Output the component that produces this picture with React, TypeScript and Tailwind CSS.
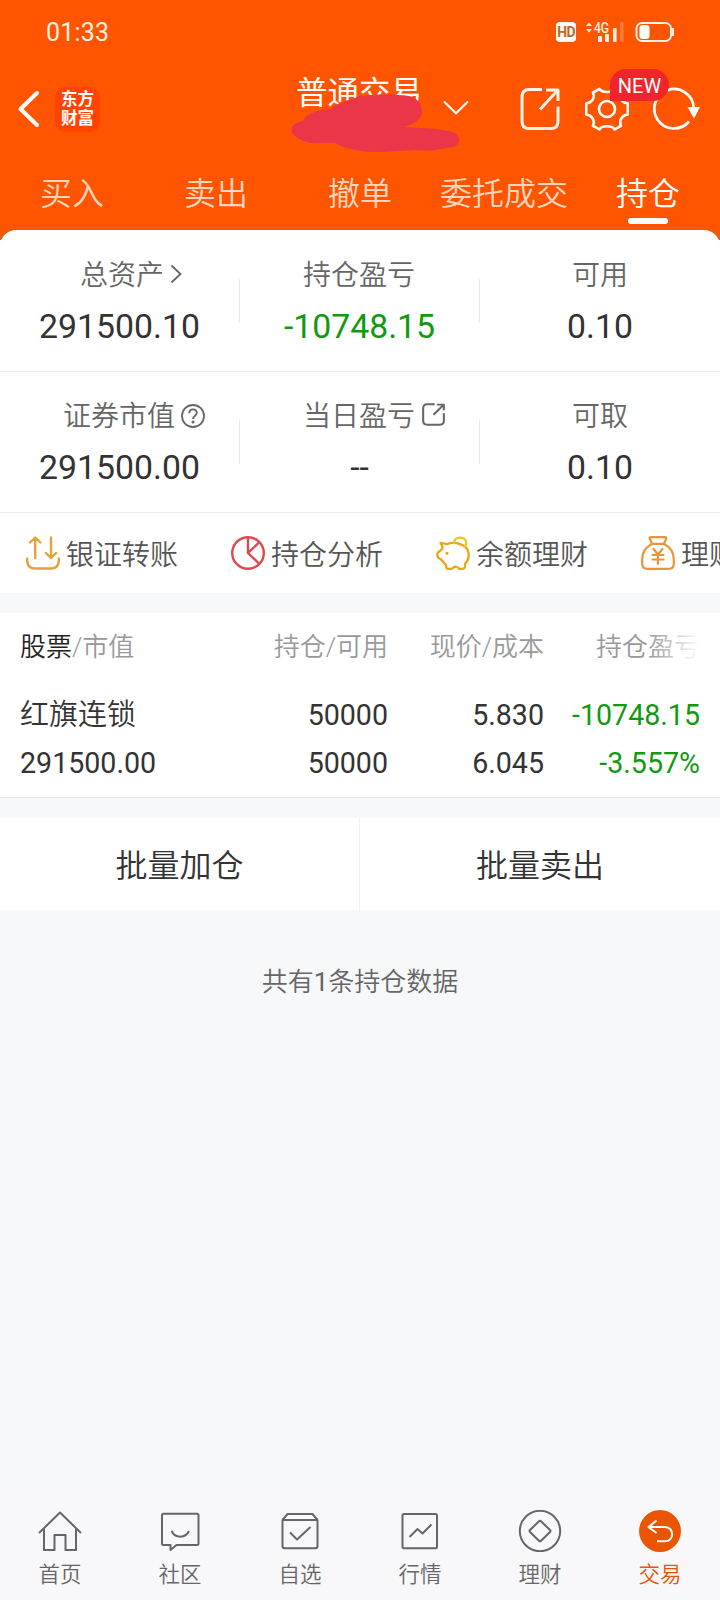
import type { ReactNode } from "react";

const tabs = ["买入", "卖出", "撤单", "委托成交", "持仓"];

const ShareIcon = ({ className, width }: { className: string; width: number }) => (
  <svg
    viewBox="0 0 40 44"
    preserveAspectRatio="none"
    className={className}
    fill="none"
    stroke="currentColor"
    strokeWidth={width}
    strokeLinejoin="round"
  >
    <path d="M22 2.5H9Q2 2.5 2 10V34Q2 41.5 9 41.5H31Q38 41.5 38 34V19.5" />
    <path d="M20 22.5L37 4M26 3H38V14" />
  </svg>
);

const assets = [
  [
    { label: "总资产", value: "291500.10", icon: "arrow" },
    { label: "持仓盈亏", value: "-10748.15", green: true },
    { label: "可用", value: "0.10" },
  ],
  [
    { label: "证券市值", value: "291500.00", icon: "help" },
    { label: "当日盈亏", value: "--", icon: "share" },
    { label: "可取", value: "0.10" },
  ],
];

const labelIcons: Record<string, ReactNode> = {
  arrow: (
    <svg viewBox="0 0 12 20" className="absolute left-full top-[7px] ml-[6px] h-5 w-3" fill="none" stroke="currentColor" strokeWidth="1.8">
      <path d="M1.5 1.5L10.5 10L1.5 18.5" />
    </svg>
  ),
  help: (
    <svg viewBox="0 0 24 24" className="absolute left-full top-[6px] ml-[6px] h-6 w-6" fill="none" stroke="currentColor" strokeWidth="1.8">
      <circle cx="12" cy="12" r="11" />
      <path d="M8.3 9.3C8.3 4 15.8 4.2 15.8 8.8C15.8 11.6 12 11.8 12 15" strokeWidth="1.9" />
      <circle cx="12" cy="18" r="0.7" fill="currentColor" />
    </svg>
  ),
  share: <ShareIcon width={3.6} className="absolute left-full top-[5px] ml-[7px] h-[23px] w-[23px]" />,
};

const shortcuts = [
  {
    label: "银证转账",
    icon: (
      <svg viewBox="0 0 34 34" className="h-[34px] w-[34px] shrink-0" fill="none" stroke="#e8a03c" strokeWidth="2.4" strokeLinecap="round" strokeLinejoin="round">
        <path d="M9.2 22V2M4 6.5L9.2 1.5L14.3 6.5M25 1.5V21.5M19.8 17L25 22L30.2 17" />
        <path d="M1.2 22.5V25.5Q2 32.5 9 32.5H25Q32 32.5 32.8 25.5V22.5" />
      </svg>
    ),
  },
  {
    label: "持仓分析",
    icon: (
      <svg viewBox="0 0 34 34" className="h-[34px] w-[34px] shrink-0" fill="none" stroke="#dc4a50" strokeWidth="2.4" strokeLinejoin="round">
        <circle cx="17" cy="17" r="15.8" />
        <path d="M17 1.5V17L28 6.5M17 17L28 27.5" />
      </svg>
    ),
  },
  {
    label: "余额理财",
    icon: (
      <svg viewBox="0 0 34 34" className="h-[34px] w-[34px] shrink-0" fill="none" stroke="#e9a714" strokeWidth="2.3" strokeLinecap="round" strokeLinejoin="round">
        <path d="M4.5 6.8Q8 7 10.8 8.2C19 5 31 8.5 32.5 16.5C33.3 22 31.5 25.5 29 27.8V31Q28.5 32.8 26.5 32.8H23Q22 30.8 20.5 30.8H18Q17 32.8 15.5 32.8H11.5Q10 32.5 10 29C7 27 7 24.5 4.5 23Q1.2 21.8 1.2 18.5Q1.5 16.5 5 14Q7.5 12 6 9.8Z" />
        <path d="M18 7C18 0 30.5-.5 30.3 7.2Q30.2 9 28.8 10.4" stroke="#f0c419" />
        <circle cx="11" cy="17.2" r="1.5" fill="#e9a714" stroke="none" />
      </svg>
    ),
  },
  {
    label: "理财产品",
    icon: (
      <svg viewBox="0 0 34 34" className="h-[34px] w-[34px] shrink-0" fill="none" stroke="#e8953a" strokeWidth="2.2" strokeLinecap="round" strokeLinejoin="round">
        <path d="M11 7.8L8.5 2Q8.5 1.1 10 1.1H24Q25.5 1.1 25.5 2L23 7.8Z" />
        <path d="M11 8C5 11 1.2 17 1.2 23.5V28Q1.2 32.8 6.5 32.8H27.5Q32.8 32.8 32.8 28V23.5C32.8 17 29 11 23 8" />
        <path d="M12.5 13L17 18.5L21.5 13M11.5 19H22.5M11.5 23.5H22.5M17 19V28" />
      </svg>
    ),
  },
];

const navItems = [
  {
    label: "首页",
    icon: <path d="M2 23L23 2.5L44 23M7 19V40H17.5V25H28.5V40H39V19" />,
  },
  {
    label: "社区",
    icon: (
      <>
        <path d="M6.5 3.8H40Q41.5 3.8 41.5 5.3V33.5Q41.5 35 40 35H19.5L13.5 40V35H6.5Q5 35 5 33.5V5.3Q5 3.8 6.5 3.8Z" />
        <path d="M14.5 21C18 28.5 28.5 28.5 32 21" />
      </>
    ),
  },
  {
    label: "自选",
    icon: (
      <>
        <path d="M5.5 10L10.5 4H35.5L40.5 10M5.5 10H40.5V36Q40.5 38.2 38.5 38.2H7.5Q5.5 38.2 5.5 36Z" />
        <path d="M13 22.5L20 29.5L33.5 17" />
      </>
    ),
  },
  {
    label: "行情",
    icon: (
      <>
        <rect x="5.5" y="4" width="34.5" height="34.2" rx="1.5" />
        <path d="M12.5 27L20.5 19L25.5 23.5L34.5 14.5" />
      </>
    ),
  },
  {
    label: "理财",
    icon: (
      <>
        <circle cx="23" cy="21" r="20.2" />
        <path d="M22 11.3Q23 10.3 24 11.3L33 20Q34 21 33 22L24 30.7Q23 31.7 22 30.7L13 22Q12 21 13 20Z" />
      </>
    ),
  },
  {
    label: "交易",
    active: true,
    icon: (
      <>
        <circle cx="23" cy="21" r="21" fill="#ea5504" stroke="none" />
        <path d="M19.5 10.5L11.5 17L19.5 23M12 17H28C37.5 17 37.5 31.3 28 31.3H20" stroke="#fff" />
      </>
    ),
  },
];

const StatusBar = () => (
  <div className="flex h-16 items-center pl-[46px] pr-[45px] text-[#fff0e4]">
    <span className="text-[25px] leading-none tracking-[0.2px]">01:33</span>
    <span className="ml-auto flex h-5 w-5 items-center justify-center rounded bg-white text-[14px] font-bold leading-none tracking-tighter text-[#c8641e]">
      HD
    </span>
    <svg viewBox="0 0 40 22" className="ml-[9px] h-[22px] w-10" fill="currentColor">
      <path d="M1 5L4 1.5L7 5ZM1 8L4 11.5L7 8Z" />
      <text x="9" y="11.5" fontSize="14" fontWeight="500" textLength="15" lengthAdjust="spacingAndGlyphs">4G</text>
      <rect x="13" y="15" width="4" height="6" rx="1" />
      <rect x="20" y="13" width="4" height="8" rx="1" />
      <rect x="28" y="7" width="3.6" height="14" rx="1" />
      <rect x="35" y="1" width="3.6" height="20" rx="1" opacity="0.25" />
    </svg>
    <svg viewBox="0 0 40 20" className="ml-[10px] h-5 w-10" fill="none" stroke="currentColor" strokeWidth="2">
      <rect x="1.5" y="1" width="34.5" height="18" rx="5.5" />
      <rect x="4.5" y="3" width="10" height="14" rx="3" fill="#fff" stroke="none" />
      <path d="M38 6V14" />
    </svg>
  </div>
);

const TopBar = () => (
  <div className="relative flex h-[90px] items-center pl-[17px] text-white">
    <svg viewBox="0 0 23 38" className="h-[38px] w-[23px]" fill="none" stroke="currentColor" strokeWidth="4" strokeLinecap="round" strokeLinejoin="round">
      <path d="M20 3L3.5 19L20 35" />
    </svg>
    <div className="ml-[15px] flex h-[45px] w-[45px] flex-col items-center justify-center rounded-[10px] bg-[#ff4400] text-[16.5px] font-bold leading-[19px]">
      <span>东方</span>
      <span>财富</span>
    </div>
    <h1 className="mb-[30px] ml-[196px] text-[31.5px] leading-none">普通交易</h1>
    {/* hand-drawn mark hiding the account number */}
    <svg viewBox="0 0 170 60" className="absolute left-[290px] top-[30px] h-[60px] w-[170px]" fill="#ea3648">
      <path d="M2 39C0 33 4 28 13 27C16 20 26 16 41 15C45 9 60 6 70 2C84 0 105 0 119 2C128 4 132 11 132 17C132 25 125 30 114 33L147 35C154 37 169 36 169 46C169 54 161 53 155 54C145 57 137 57 125 56L92 58C74 58 60 57 45 49H22C12 48 4 42 2 39Z" />
    </svg>
    <svg viewBox="0 0 26 15" className="mb-1 ml-[21px] h-[15px] w-[26px] shrink-0" fill="none" stroke="currentColor" strokeWidth="2">
      <path d="M1 1.5L13 13.3L25 1.5" />
    </svg>
    <ShareIcon width={3} className="ml-[51px] h-11 w-10 shrink-0 text-[#fff3ea]" />
    <svg viewBox="0 0 44 44" className="ml-[25px] h-11 w-11 shrink-0" fill="none" stroke="currentColor" strokeWidth="2.6" strokeLinejoin="round">
      <path d="M14.5 1.8C16.5 6 27.5 6 29.5 1.8L36 5.5C33.5 11 37.5 16 42.8 16.5V27.5C37.5 28 33.5 33 36 38.8L29.5 42.4C27.5 38.2 16.5 38.2 14.5 42.4L8 38.8C10.5 33 6.5 28 1.2 27.5V16.5C6.5 16 10.5 11 8 5.5Z" />
      <circle cx="22" cy="22" r="8" />
    </svg>
    <svg viewBox="0 0 48 44" className="ml-[24px] h-11 w-12 shrink-0" fill="none" stroke="currentColor" strokeWidth="2.7">
      <path d="M36 34.5A19.7 19.7 0 1 1 40.7 21" />
      <path d="M34.5 20H47L41 31.5Z" fill="currentColor" stroke="none" />
    </svg>
    <span className="absolute left-[610px] top-[5px] flex h-8 w-[59px] items-center justify-center rounded-2xl rounded-bl-none bg-[#f0242b] pt-0.5 text-[20px] leading-none">
      NEW
    </span>
  </div>
);

const App = () => {
  return (
    <div className="flex h-[1600px] w-[720px] flex-col overflow-hidden bg-[#f6f8fa] font-['Roboto','Noto_Sans_CJK_SC',sans-serif] text-[#333]">
      <header className="h-[240px] shrink-0 bg-[#ff5500]">
        <StatusBar />
        <TopBar />
        <nav className="grid h-[76px] grid-cols-5">
          {tabs.map((tab) => (
            <div
              key={tab}
              className={`flex flex-col items-center pt-4 text-[32px] font-[350] leading-[48px] ${tab === "持仓" ? "text-white" : "text-[#ffd5bd]"}`}
            >
              {tab}
              {tab === "持仓" && <span className="h-1.5 w-10 rounded-sm bg-white" />}
            </div>
          ))}
        </nav>
        <div className="h-[10px] bg-[#ec5a10]" />
      </header>

      <section className="-mt-[10px] shrink-0 rounded-t-[16px] bg-white">
        {assets.map((row, i) => (
          <div key={i} className={`grid grid-cols-3 border-b border-[#ebebeb] ${i === 0 ? "h-[142px] pt-px" : "h-[141px]"}`}>
            {row.map((item, col) => (
              <div key={item.label} className={`relative flex flex-col items-center pt-[26px] ${col < 2 ? "pr-px" : ""}`}>
                <div className={`relative text-[28px] font-[350] leading-[38px] text-[#666] ${item.icon === "arrow" ? "left-[3px]" : ""} ${col < 2 ? "-ml-px" : ""}`}>
                  {item.label}
                  {item.icon && labelIcons[item.icon]}
                </div>
                <div className={`mt-[12px] text-[33.8px] leading-[40px] ${item.green ? "text-[#109a10]" : ""}`}>
                  {item.value}
                </div>
                {col < 2 && <span className="absolute right-0 top-12 h-11 w-px bg-[#e8e8e8]" />}
              </div>
            ))}
          </div>
        ))}
        <div className="flex h-20 gap-[53px] overflow-hidden pl-[26px]">
          {shortcuts.map((item) => (
            <div key={item.label} className="flex shrink-0 items-center gap-1.5 text-[28px] font-[350] text-[#555]">
              {item.icon}
              <span className="relative top-[3px]">{item.label}</span>
            </div>
          ))}
        </div>
      </section>

      <section className="mt-5 h-[185px] shrink-0 border-b border-[#e8e8e8] bg-white px-5">
        <div className="grid grid-cols-[210px_158px_156px_156px] pt-[15px] text-right text-[26px] font-[350] leading-[38px] text-[#999]">
          <div className="text-left">
            <span className="text-[#222]">股票</span>/市值
          </div>
          <div>持仓/可用</div>
          <div>现价/成本</div>
          <div className="relative">
            持仓盈亏
            <span className="absolute inset-y-0 right-0 w-[52px] bg-gradient-to-r from-white/0 to-white" />
          </div>
        </div>
        <div className="mt-[29px] grid grid-cols-[210px_158px_156px_156px] gap-y-2 text-right text-[28.6px] leading-[40px]">
          <div className="text-left text-[29px] font-[350]">红旗连锁</div>
          <div>50000</div>
          <div>5.830</div>
          <div className="text-[#109a10]">-10748.15</div>
          <div className="text-left">291500.00</div>
          <div>50000</div>
          <div>6.045</div>
          <div className="text-[#109a10]">-3.557%</div>
        </div>
      </section>

      <div className="mt-5 grid h-[92px] shrink-0 grid-cols-2 bg-white text-[32px] font-[350] leading-[92px]">
        <button className="border-r border-[#f0f1f4] pt-0.5">批量加仓</button>
        <button className="pt-0.5">批量卖出</button>
      </div>

      <p className="mt-[53px] text-center text-[26px] font-[350] leading-[38px] text-[#666]">
        共有<span className="font-normal">1</span>条持仓数据
      </p>

      <footer className="mt-auto grid h-[104px] grid-cols-6 bg-[#f8f8fa] pt-1">
        {navItems.map((item) => (
          <div
            key={item.label}
            className={`flex flex-col items-center pt-[10px] text-[21.5px] leading-[30px] ${item.active ? "text-[#ea5504]" : "text-[#666]"}`}
          >
            <svg viewBox="0 0 46 42" className="h-[42px] w-[46px]" fill="none" stroke="currentColor" strokeWidth="2" strokeLinejoin="round">
              {item.icon}
            </svg>
            <span className="mt-2 font-[350]">{item.label}</span>
          </div>
        ))}
      </footer>
    </div>
  );
};

export default App;
